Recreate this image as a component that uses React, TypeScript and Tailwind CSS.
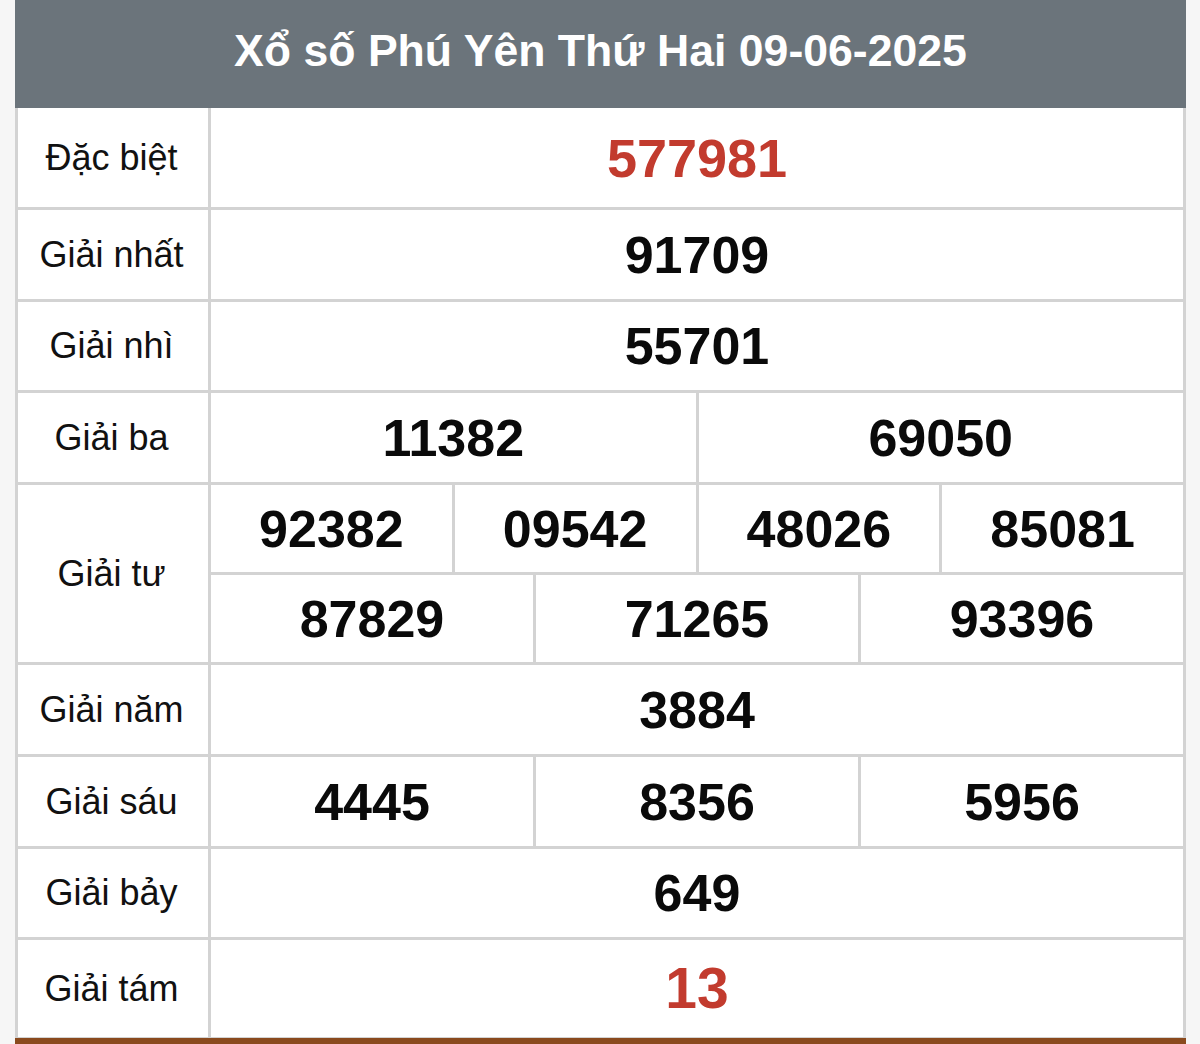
import React from "react";

const font = { fontFamily: '"Liberation Sans", Arial, sans-serif' };

function Label({ children }: { children: React.ReactNode }) {
  return (
    <div className="w-[193px] shrink-0 border-r-[3px] border-[#d3d3d3] pr-[3px] flex items-center justify-center text-[36px] text-[#111] leading-none">
      {children}
    </div>
  );
}

function Num({ v, size, last = false }: { v: string; size: "sp" | "red" | "n"; last?: boolean }) {
  const cls =
    size === "sp"
      ? "text-[54px] text-[#c23b2e] "
      : size === "red"
      ? "text-[57px] text-[#c23b2e] "
      : "text-[52px] text-[#0a0a0a] ";
  return (
    <div
      className={
        "flex-1 flex items-center justify-center font-bold leading-none " +
        cls +
        (last ? "" : "border-r-[3px] border-[#d3d3d3]")
      }
    >
      {v}
    </div>
  );
}

function Row({
  label,
  values,
  h,
  size = "n",
  border = "border-b-[3px]",
}: {
  label: string;
  values: string[];
  h: string;
  size?: "sp" | "red" | "n";
  border?: string;
}) {
  return (
    <div className={`flex ${h} ${border} border-[#d3d3d3]`}>
      <Label>{label}</Label>
      <div className="flex flex-1">
        {values.map((v, i) => (
          <Num key={i} v={v} size={size} last={i === values.length - 1} />
        ))}
      </div>
    </div>
  );
}

export default function App() {
  return (
    <div className="min-h-screen bg-[#f6f6f6]" style={font}>
      <div className="ml-[15px] w-[1171px]">
        <div className="h-[108px] bg-[#6b747b] flex items-center justify-center pb-[6px] text-white font-bold text-[44.6px] leading-none">
          Xổ số Phú Yên Thứ Hai 09-06-2025
        </div>
        <div className="bg-white border-x-[3px] border-[#d3d3d3]">
          <Row label="Đặc biệt" values={["577981"]} h="h-[102px]" size="sp" />
          <Row label="Giải nhất" values={["91709"]} h="h-[92px]" />
          <Row label="Giải nhì" values={["55701"]} h="h-[91px]" />
          <Row label="Giải ba" values={["11382", "69050"]} h="h-[92px]" />
          <div className="flex h-[180px] border-b-[3px] border-[#d3d3d3]">
            <Label>Giải tư</Label>
            <div className="flex flex-1 flex-col">
              <div className="flex h-[90px] border-b-[3px] border-[#d3d3d3]">
                {["92382", "09542", "48026", "85081"].map((v, i) => (
                  <Num key={i} v={v} size="n" last={i === 3} />
                ))}
              </div>
              <div className="flex flex-1">
                {["87829", "71265", "93396"].map((v, i) => (
                  <Num key={i} v={v} size="n" last={i === 2} />
                ))}
              </div>
            </div>
          </div>
          <Row label="Giải năm" values={["3884"]} h="h-[92px]" />
          <Row label="Giải sáu" values={["4445", "8356", "5956"]} h="h-[92px]" />
          <Row label="Giải bảy" values={["649"]} h="h-[91px]" />
          <Row label="Giải tám" values={["13"]} h="h-[98px]" size="red" border="border-b-[1px]" />
        </div>
        <div className="h-[10px] bg-[#8a4a1e]" />
      </div>
    </div>
  );
}
